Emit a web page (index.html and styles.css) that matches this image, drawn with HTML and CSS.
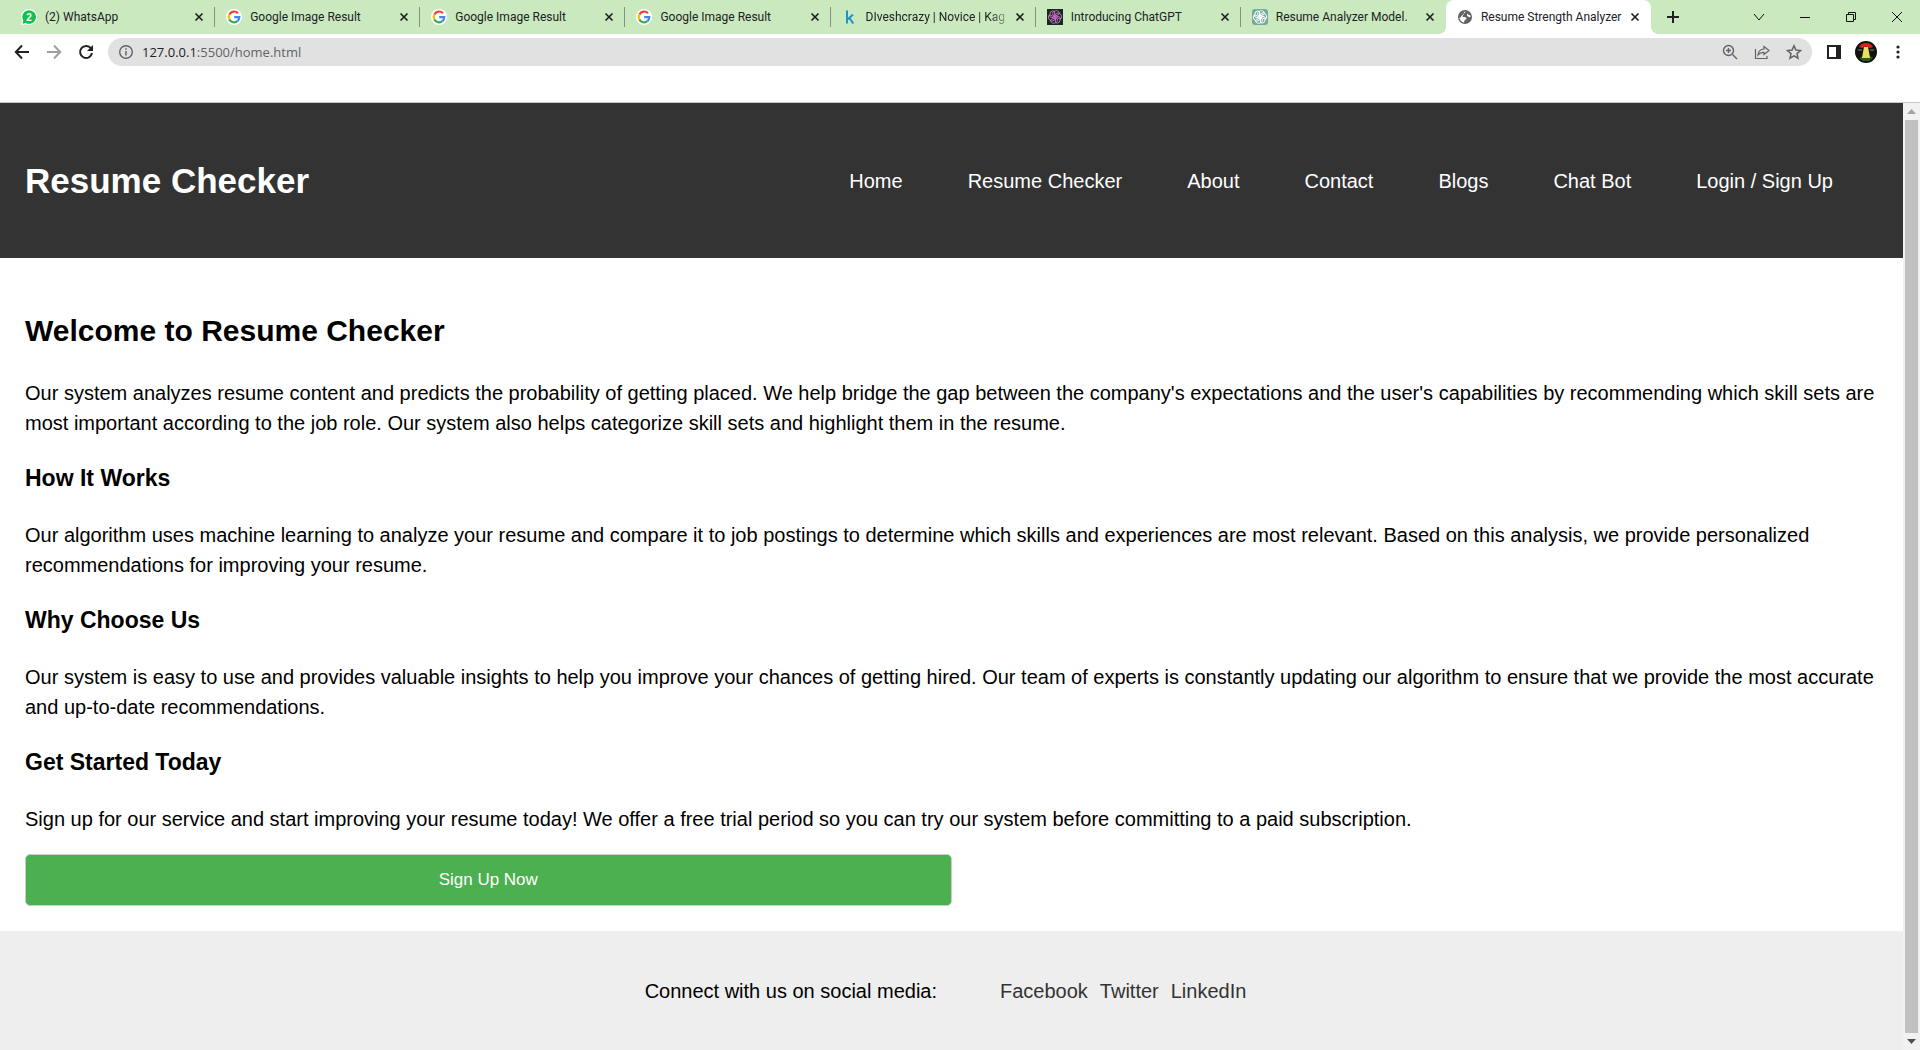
FILE: index.html
```html
<!DOCTYPE html>
<html lang="en">
<head>
<meta charset="utf-8">
<title>Resume Strength Analyzer</title>
<link rel="stylesheet" href="styles.css">
</head>
<body>
<svg class="defs" aria-hidden="true">
  <symbol id="close" viewBox="0 0 10 10"><path d="M1.500 1.500l7 7M8.500 1.500l-7 7" stroke="#202124" stroke-width="1.700" fill="none"/></symbol>
  <symbol id="google" viewBox="0 0 16 16"><circle cx="8" cy="8" r="8" fill="#fff"/><g fill="none" stroke-width="2.200"><path d="M12 4.200A5.300 5.300 0 0 0 3.400 5.400" stroke="#ea4335"/><path d="M3.400 5.400a5.300 5.300 0 0 0 0 5.200" stroke="#fbbc05"/><path d="M3.400 10.600a5.300 5.300 0 0 0 8 1.500" stroke="#34a853"/><path d="M11.400 12.100A5.300 5.300 0 0 0 13.300 8.200H8.200" stroke="#4285f4"/></g></symbol>
  <symbol id="knot" viewBox="0 0 16 16"><g fill="none" stroke="currentColor" stroke-width="1"><path id="petal" d="M8 2.200c2-1.400 4.700.2 4.400 2.600L8.200 7.300 5.700 5.900V4.300C5.700 3 6.800 2 8 2.200"/><use href="#petal" transform="rotate(60 8 8)"/><use href="#petal" transform="rotate(120 8 8)"/><use href="#petal" transform="rotate(180 8 8)"/><use href="#petal" transform="rotate(240 8 8)"/><use href="#petal" transform="rotate(300 8 8)"/></g></symbol>
</svg>

<div class="tab-strip">
  <div class="tabs">
    <div class="tab">
      <svg class="favicon" viewBox="0 0 16 16"><path d="M8 0a8 8 0 1 1-3.500 15.200L0 16l.9-4.300A8 8 0 0 1 8 0z" fill="#fff"/><path d="M8 1.200a6.800 6.800 0 1 1-3.200 12.700l-3.300.8.800-3.200A6.800 6.800 0 0 1 8 1.200z" fill="#12c14b"/><text x="8" y="11.500" class="badge-count">2</text></svg>
      <span class="tab-title">(2) WhatsApp</span>
      <button class="tab-close" aria-label="Close tab"><svg><use href="#close"/></svg></button>
    </div>
    <div class="tab">
      <svg class="favicon"><use href="#google"/></svg>
      <span class="tab-title">Google Image Result</span>
      <button class="tab-close" aria-label="Close tab"><svg><use href="#close"/></svg></button>
    </div>
    <div class="tab">
      <svg class="favicon"><use href="#google"/></svg>
      <span class="tab-title">Google Image Result</span>
      <button class="tab-close" aria-label="Close tab"><svg><use href="#close"/></svg></button>
    </div>
    <div class="tab">
      <svg class="favicon"><use href="#google"/></svg>
      <span class="tab-title">Google Image Result</span>
      <button class="tab-close" aria-label="Close tab"><svg><use href="#close"/></svg></button>
    </div>
    <div class="tab">
      <svg class="favicon" viewBox="0 0 16 16"><path d="M5 1.500v13M11 5.500L5.800 10.200M7.300 8.800l4 5.700" stroke="#1a95c4" stroke-width="2" fill="none"/></svg>
      <span class="tab-title tab-title-fade">DIveshcrazy | Novice | Kag</span>
      <button class="tab-close" aria-label="Close tab"><svg><use href="#close"/></svg></button>
    </div>
    <div class="tab">
      <svg class="favicon knot-dark" viewBox="0 0 16 16"><rect width="16" height="16" fill="#142b1b"/><use href="#knot"/></svg>
      <span class="tab-title">Introducing ChatGPT</span>
      <button class="tab-close" aria-label="Close tab"><svg><use href="#close"/></svg></button>
    </div>
    <div class="tab">
      <svg class="favicon knot-light" viewBox="0 0 16 16"><rect width="16" height="16" rx="3" fill="#75a99c"/><use href="#knot"/></svg>
      <span class="tab-title">Resume Analyzer Model.</span>
      <button class="tab-close" aria-label="Close tab"><svg><use href="#close"/></svg></button>
    </div>
    <div class="tab tab-active">
      <svg class="favicon" viewBox="0 0 16 16"><circle cx="8" cy="8" r="7" fill="#5f6368"/><path d="M9 2.400c-2 0-2.500 1-2 2 .5 1.200-1.500 1-1.500 2.600 0 1.500 2.500.8 3.500 1.500 1.200.9.300 1.700-.8 2.300-.9.500-.7 1.500-1.200 2.700-2.500-.3-4.500-2.500-4.700-5 1.300.5 2-.5 2-1.500L9 2.400zM10 4.500c1 .8 1.500 1.500 3 1.500l.5 2c-1.500.5-3-.5-3.500-1.500z" fill="#fff"/></svg>
      <span class="tab-title">Resume Strength Analyzer</span>
      <button class="tab-close" aria-label="Close tab"><svg><use href="#close"/></svg></button>
    </div>
  </div>
  <button class="new-tab" aria-label="New tab"><svg viewBox="0 0 12 12"><path d="M6 0v12M0 6h12" stroke="#202124" stroke-width="2"/></svg></button>
  <div class="window-controls">
    <button aria-label="Search tabs"><svg viewBox="0 0 12 12"><path d="M1 3l5 6 5-6"/></svg></button>
    <button aria-label="Minimize"><svg viewBox="0 0 12 12"><path d="M1 6.500h10"/></svg></button>
    <button aria-label="Restore"><svg viewBox="0 0 12 12"><path d="M1.500 3.500h7v7h-7zM3.500 3.500v-2h7v7h-2"/></svg></button>
    <button aria-label="Close"><svg viewBox="0 0 12 12"><path d="M1 1l10 10M11 1L1 11"/></svg></button>
  </div>
</div>

<div class="toolbar">
  <button class="tool" aria-label="Back"><svg viewBox="0 0 16 16"><path d="M15 8H2M8 1.500L1.800 8 8 14.500" stroke="#202124" stroke-width="2" fill="none"/></svg></button>
  <button class="tool" aria-label="Forward"><svg viewBox="0 0 16 16"><path d="M1 8h13M8 1.500L14.200 8 8 14.500" stroke="#a0a0a0" stroke-width="2" fill="none"/></svg></button>
  <button class="tool" aria-label="Reload"><svg viewBox="0 0 16 16"><path d="M13 4.500A6 6 0 1 0 14 9" stroke="#202124" stroke-width="2" fill="none"/><path d="M15 1v6H9z" fill="#202124"/></svg></button>
  <div class="omnibox">
    <svg class="info" viewBox="0 0 16 16"><circle cx="8" cy="8" r="6.300" stroke="#5f6368" stroke-width="1.400" fill="none"/><path d="M8 7v4.500M8 4.300v1.500" stroke="#5f6368" stroke-width="1.500"/></svg>
    <span class="url"><span class="host">127.0.0.1</span>:5500/home.html</span>
    <button class="tool" aria-label="Zoom"><svg viewBox="0 0 16 16"><path d="M10.500 10.500L15 15M6.500 4v5M4 6.500h5" stroke="#5f6368" stroke-width="1.400"/><circle cx="6.500" cy="6.500" r="5" stroke="#5f6368" stroke-width="1.400" fill="none"/></svg></button>
    <button class="tool" aria-label="Share"><svg viewBox="0 0 16 16"><path d="M1.500 5v9.500h11.500V12M10 2.500l5 4-5 4V8.300C7.500 8.300 5.500 9 4 11c.3-3.500 2.500-5.700 6-6z" stroke="#5f6368" stroke-width="1.200" fill="none"/></svg></button>
    <button class="tool" aria-label="Bookmark"><svg viewBox="0 0 16 16"><path d="M8 1.800l1.900 4.300 4.600.4-3.500 3.100 1 4.600L8 11.800l-4 2.400 1-4.600L1.500 6.500l4.600-.4z" stroke="#5f6368" stroke-width="1.500" fill="none"/></svg></button>
  </div>
  <button class="tool" aria-label="Side panel"><svg viewBox="0 0 16 16"><path d="M1 1h14v14H1zM3 3v10h7V3z" fill="#202124" fill-rule="evenodd"/></svg></button>
  <button class="tool tool-profile" aria-label="Profile"><svg viewBox="0 0 22 22"><circle cx="11" cy="11" r="11" fill="#10120e"/><path d="M4 6Q6 2 11 2t7 4l-3 1-4-1.500L7 7z" fill="#d3251d"/><path d="M4 17l4-2h7l3 2-4 3H8z" fill="#2c5a1e"/><path d="M9 6h4l1 5 1 6H7l1-6z" fill="#e9df5a"/><path d="M3 9h4M15 9h4" stroke="#888" stroke-width="1"/></svg></button>
  <button class="tool" aria-label="Menu"><svg viewBox="0 0 16 16" fill="#202124"><circle cx="8" cy="3" r="1.600"/><circle cx="8" cy="8" r="1.600"/><circle cx="8" cy="13" r="1.600"/></svg></button>
</div>

<div class="viewport">
  <div class="page">
    <header class="site-header">
      <h1>Resume Checker</h1>
      <nav>
        <a href="#">Home</a>
        <a href="#">Resume Checker</a>
        <a href="#">About</a>
        <a href="#">Contact</a>
        <a href="#">Blogs</a>
        <a href="#">Chat Bot</a>
        <a href="#">Login / Sign Up</a>
      </nav>
    </header>
    <main>
      <h2>Welcome to Resume Checker</h2>
      <p>Our system analyzes resume content and predicts the probability of getting placed. We help bridge the gap between the company's expectations and the user's capabilities by recommending which skill sets are most important according to the job role. Our system also helps categorize skill sets and highlight them in the resume.</p>
      <h3>How It Works</h3>
      <p>Our algorithm uses machine learning to analyze your resume and compare it to job postings to determine which skills and experiences are most relevant. Based on this analysis, we provide personalized recommendations for improving your resume.</p>
      <h3>Why Choose Us</h3>
      <p>Our system is easy to use and provides valuable insights to help you improve your chances of getting hired. Our team of experts is constantly updating our algorithm to ensure that we provide the most accurate and up-to-date recommendations.</p>
      <h3>Get Started Today</h3>
      <p>Sign up for our service and start improving your resume today! We offer a free trial period so you can try our system before committing to a paid subscription.</p>
      <button class="sign-up">Sign Up Now</button>
    </main>
    <footer>
      <p>Connect with us on social media:</p>
      <ul>
        <li><a href="#">Facebook</a></li>
        <li><a href="#">Twitter</a></li>
        <li><a href="#">LinkedIn</a></li>
      </ul>
    </footer>
  </div>
  <div class="scrollbar">
    <svg viewBox="0 0 17 17"><path d="M4 11l4.500-5 4.500 5z" fill="#a3a3a3"/></svg>
    <div class="thumb"></div>
    <svg viewBox="0 0 17 17"><path d="M4 6l4.500 5L13 6z" fill="#505050"/></svg>
  </div>
</div>
</body>
</html>
```
FILE: styles.css
```css
* { box-sizing: border-box; }

body {
  margin: 0;
  min-height: 100vh;
  display: flex;
  flex-direction: column;
  background: #fff;
  color: #000;
  font: 20px/30px "Liberation Sans", Arial, sans-serif;
}

button {
  border: 0;
  padding: 0;
  background: none;
  font: inherit;
}

a { text-decoration: none; }
svg { display: block; }
.defs { position: absolute; width: 0; height: 0; }

/* Tab strip */
.tab-strip {
  display: flex;
  align-items: center;
  height: 34px;
  padding-left: 10px;
  background: #cbe9bf;
  color: #202124;
  font: 12px/16px Roboto, "Open Sans", sans-serif;
}

.tabs { display: flex; flex: 0 1 1641px; min-width: 0; }

.tab {
  flex: 1 1 0;
  min-width: 0;
  height: 34px;
  display: flex;
  align-items: center;
  padding: 0 11px;
  background: linear-gradient(#80957a, #80957a) right center / 1px 20px no-repeat;
}

.tab:nth-last-child(2) { background: none; }
.tab-active { position: relative; background: #fff; border-radius: 8px 8px 0 0; }

/* Flared feet of the active tab */
.tab-active::before,
.tab-active::after {
  content: "";
  position: absolute;
  bottom: 0;
  width: 8px;
  height: 8px;
}
.tab-active::before { right: 100%; background: radial-gradient(circle at 0 0, transparent 8px, #fff 8px); }
.tab-active::after { left: 100%; background: radial-gradient(circle at 100% 0, transparent 8px, #fff 8px); }

.favicon { flex: none; width: 16px; height: 16px; }
.knot-dark { color: #c36bc0; }
.knot-light { color: #fff; }

.badge-count {
  fill: #fff;
  font: bold 10px "Liberation Sans", Arial, sans-serif;
  text-anchor: middle;
}

.tab-title {
  flex: 1;
  min-width: 0;
  margin: 0 2px 0 8px;
  overflow: hidden;
  white-space: nowrap;
}

.tab-title-fade { mask-image: linear-gradient(to left, transparent, #000 24px); }

.tab-close { flex: none; width: 10px; height: 10px; }
.tab-close svg { width: 10px; height: 10px; }

.new-tab { padding: 0 16px; }
.new-tab svg { width: 12px; height: 12px; }

.window-controls { display: flex; margin-left: auto; height: 28px; }
.window-controls button { width: 46px; display: grid; place-items: center; }
.window-controls svg { width: 12px; height: 12px; fill: none; stroke: #111; stroke-width: 1; }

/* Toolbar */
.toolbar {
  display: flex;
  align-items: center;
  gap: 16px;
  height: 36px;
  padding: 0 14px;
}

.tool { flex: none; width: 16px; height: 16px; }
.tool svg { width: 100%; height: 100%; }
.tool-profile { width: 22px; height: 22px; margin: 0 -3px; }

.omnibox {
  flex: 1;
  display: flex;
  align-items: center;
  gap: 16px;
  height: 28px;
  margin: 0 -2px;
  padding: 0 10px;
  border-radius: 14px;
  background: #e1e1e1;
}

.info { width: 16px; height: 16px; margin-right: -8px; }
.url { flex: 1; color: #5f6368; font: 13px/16px "Open Sans", "Noto Sans", sans-serif; }
.host { color: #202124; }

/* Page */
.viewport {
  flex: 1;
  display: flex;
  margin-top: 32px;
  border-top: 1px solid #c8c8c8;
}

.page { flex: 1; min-width: 0; display: flex; flex-direction: column; }

.site-header {
  display: flex;
  align-items: center;
  justify-content: space-between;
  height: 155px;
  padding: 0 70px 0 25px;
  background: #333;
  color: #fff;
}

h1 { margin: 0; font-size: 35px; line-height: 50px; }
nav { display: flex; gap: 65px; }
nav a { color: #fff; }

main { padding: 25px; }
h2 { margin: 25px 0; font-size: 30px; line-height: 45px; }
h3 { margin: 22px 0 24px; font-size: 23px; line-height: 36px; }
main p { margin: 20px 0; }

.sign-up {
  display: block;
  width: 50%;
  height: 52px;
  border: 1px solid #ccc;
  border-radius: 5px;
  background: #4caf50;
  color: #fff;
  font-size: 17px;
}

/* Footer */
footer {
  flex: 1;
  display: flex;
  justify-content: center;
  padding: 45px 25px 40px;
  background: #eee;
}

footer p { margin: 0; }
footer ul { display: flex; margin: 0; padding: 0 0 0 63px; list-style: none; }
footer li { margin-right: 12px; }
footer a { color: #333; }

.scrollbar {
  width: 17px;
  display: flex;
  flex-direction: column;
  background: #f1f1f1;
}

.scrollbar svg { width: 17px; height: 17px; }
.thumb { flex: 1; margin: 0 2px; background: #c1c1c1; }
```
